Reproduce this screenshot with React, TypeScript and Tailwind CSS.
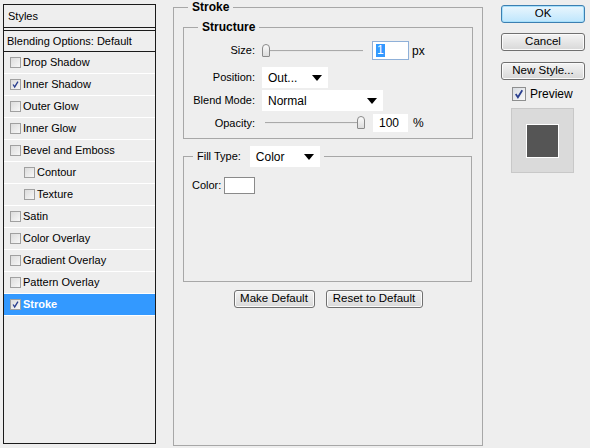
import type { ReactNode } from 'react';

const font = { fontFamily: '"Liberation Sans", Arial, sans-serif' };

function CheckMark({ size = 11 }: { size?: number }) {
  return (
    <svg width={size} height={size} viewBox="0 0 11 11" className="block">
      <path d="M2.5 5.5 L4.5 8.5 L8.5 2" fill="none" stroke="#2a3f8f" strokeWidth="1.6" />
    </svg>
  );
}

function Box({ checked, big }: { checked?: boolean; big?: boolean }) {
  return (
    <span
      className={
        big
          ? 'flex h-[14px] w-[14px] items-center justify-center border border-[#8e8f8f] bg-gradient-to-br from-[#d9dde2] to-[#f8f8f8]'
          : 'flex h-[11px] w-[11px] items-center justify-center border border-[#a0a0a0] bg-gradient-to-br from-[#dcdcdc] to-[#f7f7f7]'
      }
    >
      {checked ? <CheckMark size={big ? 12 : 9} /> : null}
    </span>
  );
}

const styleRows: { label: string; checked?: boolean; indent?: boolean; active?: boolean }[] = [
  { label: 'Drop Shadow' },
  { label: 'Inner Shadow', checked: true },
  { label: 'Outer Glow' },
  { label: 'Inner Glow' },
  { label: 'Bevel and Emboss' },
  { label: 'Contour', indent: true },
  { label: 'Texture', indent: true },
  { label: 'Satin' },
  { label: 'Color Overlay' },
  { label: 'Gradient Overlay' },
  { label: 'Pattern Overlay' },
  { label: 'Stroke', checked: true, active: true },
];

function Button({ children, primary, className }: { children: ReactNode; primary?: boolean; className?: string }) {
  return (
    <button
      type="button"
      className={
        'flex h-[18px] items-center justify-center rounded-[3px] border bg-gradient-to-b text-[11.5px] leading-none text-black ' +
        (primary
          ? 'border-[#3c7fb1] from-[#eaf6fd] to-[#bee6fd] shadow-[inset_0_0_0_1px_#a7e0fb]'
          : 'border-[#707070] from-[#f4f4f4] to-[#d8d8d8] shadow-[inset_0_0_0_1px_#fbfbfb]') +
        ' ' +
        (className ?? '')
      }
    >
      {children}
    </button>
  );
}

function Dropdown({ value, width }: { value: string; width: string }) {
  return (
    <div className={'flex h-[21px] items-center justify-between bg-white pl-[6px] pr-[6px] text-[12px] ' + width}>
      <span>{value}</span>
      <svg width="10" height="6" viewBox="0 0 10 6">
        <path d="M0 0 H10 L5 6 Z" fill="#000" />
      </svg>
    </div>
  );
}

function Slider({ thumb, width }: { thumb: 'start' | 'end'; width: string }) {
  return (
    <div className={'relative flex h-[14px] items-center ' + width}>
      <div className="h-[2px] w-full border-t border-[#a9a9a9] bg-[#e8e8e8]" />
      <div
        className={
          'absolute top-0 h-[13px] w-[8px] rounded-t-[4px] rounded-b-[1px] border border-[#8a8a8a] bg-gradient-to-b from-[#fbfbfb] to-[#dcdcdc] ' +
          (thumb === 'start' ? 'left-0' : 'right-0')
        }
      />
    </div>
  );
}

function Field({ label, children }: { label: string; children: ReactNode }) {
  return (
    <div className="flex items-center">
      <span className="w-[72px] pr-[1px] text-right text-[11px]">{label}</span>
      <div className="ml-[6px] flex items-center">{children}</div>
    </div>
  );
}

export default function App() {
  return (
    <div className="flex h-[448px] w-[590px] overflow-hidden bg-[#eeeeee] text-black" style={font}>
      {/* styles list */}
      <div className="ml-[3px] mt-[4px] flex h-[440px] w-[153px] flex-col border border-[#1a1a1a] bg-[#eeeeee]">
        <div className="flex h-[23px] items-center border-b border-[#1a1a1a] pl-[4px] text-[11px]">Styles</div>
        <div className="mt-[2px] flex h-[22px] items-center border-y border-[#1a1a1a] pl-[3px] text-[11px]">
          Blending Options: Default
        </div>
        {styleRows.map((row) => (
          <div
            key={row.label}
            className={
              'flex h-[22px] items-center gap-[2px] border-b border-white text-[11px] ' +
              (row.indent ? 'pl-[20px] ' : 'pl-[6px] ') +
              (row.active ? 'bg-[#3399ff] font-bold text-white' : '')
            }
          >
            <Box checked={row.checked} />
            <span>{row.label}</span>
          </div>
        ))}
      </div>

      {/* stroke settings */}
      <fieldset className="ml-[17px] h-[446px] w-[310px] border border-[#a7a7a7] px-[9px]">
        <legend className="ml-[5px] px-[4px] text-[12px] font-bold leading-[14px]">Stroke</legend>

        <fieldset className="mt-[7px] h-[118px] w-[290px] border border-[#a7a7a7]">
          <legend className="ml-[14px] px-[4px] text-[12px] font-bold leading-[13px]">Structure</legend>
          <div className="flex flex-col pt-[7px]">
            <div className="h-[22px]">
              <Field label="Size:">
                <Slider thumb="start" width="w-[101px]" />
                <div className="ml-[9px] flex h-[19px] w-[37px] items-center border border-[#8fb0d8] bg-white pl-[3px] text-[12px]">
                  <span className="bg-[#3399ff] px-[1px] leading-[13px] text-white">1</span>
                </div>
                <span className="ml-[3px] text-[12px]">px</span>
              </Field>
            </div>
            <div className="mt-[4px]">
              <Field label="Position:">
                <Dropdown value="Out..." width="w-[66px]" />
              </Field>
            </div>
            <div className="mt-[2px]">
              <Field label="Blend Mode:">
                <Dropdown value="Normal" width="w-[121px]" />
              </Field>
            </div>
            <div className="mt-[3px]">
              <Field label="Opacity:">
                <div className="pl-[3px]">
                  <Slider thumb="end" width="w-[100px]" />
                </div>
                <div className="ml-[8px] flex h-[18px] w-[35px] items-center bg-white pl-[6px] text-[12px]">100</div>
                <span className="ml-[5px] text-[12px]">%</span>
              </Field>
            </div>
          </div>
        </fieldset>

        <fieldset className="mt-[7px] h-[136px] w-[289px] border border-[#a7a7a7] px-[8px]">
          <legend className="ml-[1px] flex items-center px-[4px] text-[11px]">
            <span className="mr-[9px]">Fill Type:</span>
            <Dropdown value="Color" width="w-[70px]" />
          </legend>
          <div className="mt-[10px] flex items-center">
            <span className="text-[11px]">Color:</span>
            <span className="ml-[3px] h-[17px] w-[31px] border border-[#8a8a8a] bg-white" />
          </div>
        </fieldset>

        <div className="mt-[8px] flex justify-center gap-[11px]">
          <Button className="w-[81px]">Make Default</Button>
          <Button className="w-[97px]">Reset to Default</Button>
        </div>
      </fieldset>

      {/* actions */}
      <div className="ml-[18px] mt-[5px] flex w-[84px] flex-col">
        <Button primary className="w-[84px]">OK</Button>
        <Button className="mt-[10px] w-[84px]">Cancel</Button>
        <Button className="mt-[11px] w-[84px]">New Style...</Button>
        <div className="mt-[5px] flex items-center pl-[11px]">
          <Box checked big />
          <span className="ml-[4px] text-[12px]">Preview</span>
        </div>
        <div className="ml-[10px] mt-[5px] flex h-[65px] w-[63px] items-center justify-center border border-[#c8c8c8] bg-[#dadada]">
          <div className="h-[34px] w-[33px] border border-white bg-[#555555]" />
        </div>
      </div>
    </div>
  );
}
